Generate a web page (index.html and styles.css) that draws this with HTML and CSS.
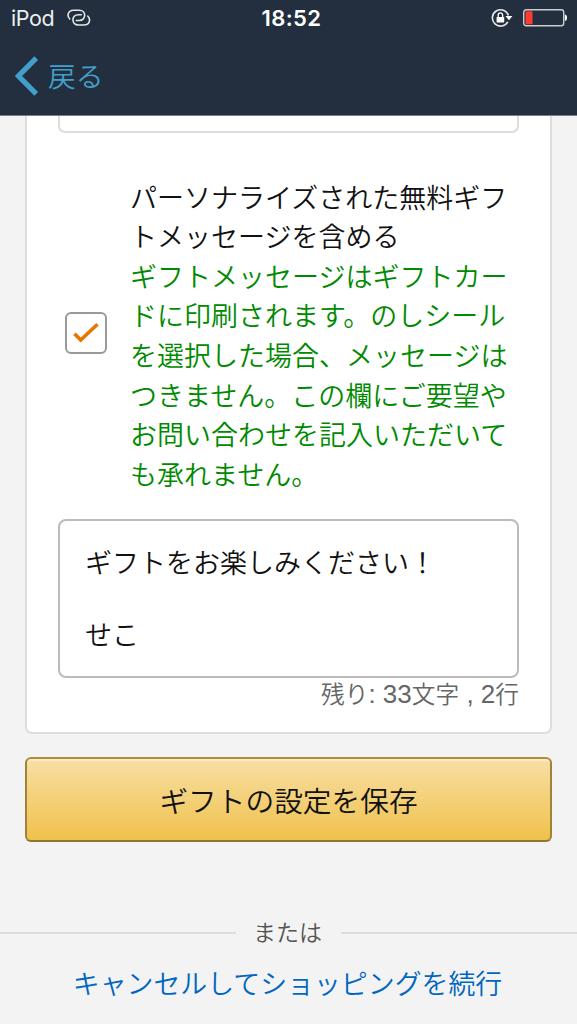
FILE: index.html
```html
<!DOCTYPE html>
<html lang="ja">
<head>
<meta charset="utf-8">
<title>ギフトの設定</title>
<link rel="stylesheet" href="styles.css">
</head>
<body>
<header class="header">
  <div class="status">
    <div class="carrier">
      <span>iPod</span>
      <svg class="link-icon" width="24" height="18" viewBox="0 0 24 18" fill="none" stroke="#e4e6e9" stroke-width="1.6" stroke-linecap="round">
        <path d="M2.700 10C-.2 7 .8 1.200 6.500 1.200h5.700c7.300 0 7.300 10.300 0 10.300H9.300"/>
        <path d="M20.900 7.200c2.900 3 1.900 8.800-3.800 8.800h-5.700c-7.300 0-7.300-10.300 0-10.300h2.900"/>
      </svg>
    </div>
    <div class="clock">18:52</div>
    <div class="indicators">
      <svg width="22" height="20" viewBox="0 0 22 20" fill="none">
        <path d="M16.800 13.800A8.200 8.200 0 1 1 17.400 7.500" stroke="#e4e6e9" stroke-width="1.600"/>
        <path d="M14.400 8h7L18 12.200z" fill="#fff"/>
        <rect x="5.600" y="8.900" width="7.600" height="5.600" rx=".6" fill="#fff"/>
        <path d="M7.200 9V7a2.200 2.200 0 0 1 4.400 0V9" stroke="#fff" stroke-width="1.300"/>
      </svg>
      <svg width="46" height="20" viewBox="0 0 46 20">
        <rect x="1.700" y="1.700" width="40" height="16" rx="2.500" fill="none" stroke="#c9cdd1" stroke-width="1.400"/>
        <rect x="3.500" y="3.300" width="7" height="12.900" rx=".6" fill="#ff3b30"/>
        <path d="M42.800 6.500c3 0 3 6.500 0 6.500z" fill="#fff"/>
      </svg>
    </div>
  </div>
  <a class="back">
    <svg width="24" height="40" viewBox="0 0 24 40" fill="none" stroke="#419fca" stroke-width="5.200"><path d="M21.200 2.200L3.500 20l17.700 17.800"/></svg>
    <span>戻る</span>
  </a>
</header>
<main class="page">
  <section class="card">
    <div class="field-end"></div>
    <label class="option">
      <span class="checkbox">
        <svg width="26" height="22" viewBox="0 0 26 22" fill="none" stroke="#e77600" stroke-width="3.600"><path d="M1.500 11.700l6.200 6.300L24.500 2.200"/></svg>
      </span>
      <span class="option-text">パーソナライズされた無料ギフ<br>トメッセージを含める<br><span class="note">ギフトメッセージはギフトカー<br>ドに印刷されます。のしシール<br>を選択した場合、メッセージは<br>つきません。この欄にご要望や<br>お問い合わせを記入いただいて<br>も承れません。</span></span>
    </label>
    <div class="message">ギフトをお楽しみください！<br><br>せこ</div>
    <div class="counter">残り<span class="latin">: 33</span>文字<span class="latin"> , 2</span>行</div>
  </section>
  <div class="save">ギフトの設定を保存</div>
  <div class="divider"><span>または</span></div>
  <a class="cancel">キャンセルしてショッピングを続行</a>
</main>
</body>
</html>
```
FILE: styles.css
```css
* { box-sizing: border-box; }
body {
  margin: 0;
  width: 577px;
  height: 1024px;
  overflow: hidden;
  background: #f3f3f3;
  color: #111;
  font-family: "Liberation Sans", "Noto Sans CJK JP", sans-serif;
  font-weight: 350;
  font-size: 27px;
}
svg { display: block; flex: none; }
.header {
  height: 116px;
  background: #232f3f;
  border-bottom: 1px solid #777e88;
}
.status {
  display: grid;
  grid-template-columns: 1fr auto 1fr;
  align-items: center;
  height: 36px;
  padding: 0 9px 0 11px;
  color: #fff;
  font-family: Inter, sans-serif;
}
.carrier { display: flex; align-items: center; gap: 13px; font-size: 21.500px; font-weight: 400; letter-spacing: -.4px; color: #eceef0; }
.clock { font-size: 22px; font-weight: 600; letter-spacing: .4px; padding-left: 4px; }
.indicators { display: flex; justify-content: flex-end; align-items: center; gap: 9px; }
.back {
  display: flex;
  align-items: center;
  gap: 9px;
  height: 80px;
  padding-left: 15px;
  color: #419fca;
  font-size: 27.800px;
}
.back span { padding-bottom: 3px; }
.page { display: flex; flex-direction: column; }
.card {
  display: flex;
  flex-direction: column;
  height: 618px;
  margin: 0 25px;
  padding: 0 31px;
  background: #fff;
  border: 2px solid #ddd;
  border-top: 0;
  border-radius: 0 0 7px 7px;
}
.field-end {
  height: 17px;
  border: 2px solid #ddd;
  border-top: 0;
  border-radius: 0 0 7px 7px;
}
.option {
  display: flex;
  align-items: center;
  gap: 23px;
  height: 317px;
  margin-top: 41px;
  padding-left: 7px;
}
.checkbox {
  display: flex;
  align-items: center;
  justify-content: center;
  flex: none;
  width: 42px;
  height: 42px;
  border: 2px solid #999;
  border-radius: 6px;
}
.option-text { padding-top: 11px; line-height: 39.600px; white-space: nowrap; }
.note { color: #008a00; }
.message {
  height: 159px;
  margin-top: 28px;
  padding: 25px 25px 0;
  border: 2px solid #bbb;
  border-radius: 8px;
  line-height: 36px;
}
.counter { color: #666; font-size: 23.700px; line-height: 34px; text-align: right; }
.latin { font-size: 26px; line-height: 1; }
.save {
  display: flex;
  align-items: center;
  justify-content: center;
  height: 85px;
  margin: 23px 25px 0;
  border: 2px solid;
  border-color: #b08f3c #a08239 #8f7432;
  border-radius: 6px;
  background: linear-gradient(#f7dfa5, #f0c14b);
  box-shadow: inset 0 2px 0 rgba(255, 255, 255, .4);
  font-size: 28.700px;
}
.divider {
  display: flex;
  align-items: center;
  gap: 18px;
  height: 36px;
  margin-top: 73px;
  color: #555;
  font-size: 23px;
}
.divider span { margin: 0 1px 0 -1px; padding-bottom: 5px; }
.divider::before, .divider::after { content: ""; flex: 1; height: 2px; background: #ddd; }
.cancel { margin: 14px 2px 0 0; font-size: 26.900px; line-height: 40px; text-align: center; color: #0066c0; }
```
